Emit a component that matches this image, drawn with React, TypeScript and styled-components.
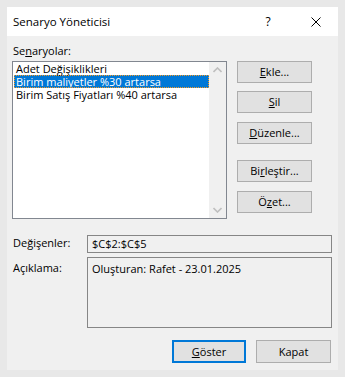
import React from 'react';
import styled, { createGlobalStyle } from 'styled-components';

const GlobalStyle = createGlobalStyle`
  html, body {
    margin: 0;
    padding: 0;
    background: #e8e8e8;
  }
  body {
    font-family: 'Open Sans', 'Noto Sans', sans-serif;
    font-size: 11px;
    color: #000;
  }
  * { box-sizing: border-box; }
`;

const Page = styled.div`
  width: 345px;
  height: 377px;
  padding: 7px;
`;

const Dialog = styled.div`
  width: 331px;
  height: 363px;
  background: #f0f0f0;
  display: flex;
  flex-direction: column;
`;

const TitleBar = styled.div`
  height: 29px;
  background: #fff;
  display: flex;
  align-items: center;
  padding-left: 6px;
`;

const Title = styled.span`
  flex: 1;
  font-size: 11.5px;
`;

const HelpGlyph = styled.span`
  width: 14px;
  text-align: center;
  font-size: 12px;
  margin-right: 36px;
`;

const CloseGlyph = styled.svg`
  width: 10px;
  height: 10px;
  margin-right: 17px;
`;

const Body = styled.div`
  flex: 1;
  display: flex;
  flex-direction: column;
  padding: 7px 6px 7px 5px;
`;

const GroupLabel = styled.div`
  line-height: 16px;
  padding-left: 1px;
  margin-bottom: 2px;
`;

const TopRow = styled.div`
  display: flex;
  gap: 10px;
`;

const ListBox = styled.div`
  width: 215px;
  height: 158px;
  border: 1px solid #828790;
  background: #fff;
  display: flex;
`;

const Items = styled.div`
  flex: 1;
`;

const Item = styled.div<{ $selected?: boolean }>`
  height: 13px;
  line-height: 13px;
  margin-left: 1px;
  padding-left: 2px;
  white-space: nowrap;
  background: ${p => (p.$selected ? '#0078d7' : 'transparent')};
  color: ${p => (p.$selected ? '#fff' : '#000')};
  outline: ${p => (p.$selected ? '1px dotted #f59a23' : 'none')};
  outline-offset: -1px;
`;

const ScrollBar = styled.div`
  width: 17px;
  background: #f0f0f0;
  display: flex;
  flex-direction: column;
  justify-content: space-between;
  align-items: center;
  padding: 5px 0;
`;

const Chevron = styled.svg`
  width: 9px;
  height: 6px;
`;

const ButtonCol = styled.div`
  display: flex;
  flex-direction: column;
  width: 75px;
`;

const Button = styled.button<{ $gapTop?: number; $primary?: boolean; $w?: number }>`
  width: ${p => p.$w ?? 75}px;
  height: 22px;
  margin-top: ${p => p.$gapTop ?? 0}px;
  background: #e1e1e1;
  border: ${p => (p.$primary ? '2px solid #0078d7' : '1px solid #adadad')};
  font-family: inherit;
  font-size: 11px;
  color: #000;
  padding: 0;
  line-height: 18px;
`;

const Fields = styled.div`
  display: flex;
  flex-direction: column;
  gap: 4px;
  margin-top: 16px;
`;

const FieldRow = styled.div`
  display: flex;
  align-items: flex-start;
`;

const FieldLabel = styled.div<{ $top?: number }>`
  width: 75px;
  padding-left: 1px;
  line-height: 16px;
  padding-top: ${p => p.$top ?? 0}px;
`;

const FieldBox = styled.div<{ $h: number; $top?: number }>`
  flex: 1;
  height: ${p => p.$h}px;
  border: 1px solid #868686;
  background: #f0f0f0;
  padding: ${p => p.$top ?? 0}px 4px 0;
  line-height: 16px;
`;

const Footer = styled.div`
  display: flex;
  justify-content: flex-end;
  gap: 10px;
  margin-top: 12px;
  padding-right: 1px;
`;

const FooterButton = styled(Button)`
  height: 23px;
`;

const App: React.FC = () => {
  return (
    <Page>
      <GlobalStyle />
      <Dialog>
        <TitleBar>
          <Title>Senaryo Yöneticisi</Title>
          <HelpGlyph>?</HelpGlyph>
          <CloseGlyph viewBox="0 0 10 10">
            <path d="M0.5 0.5 L9.5 9.5 M9.5 0.5 L0.5 9.5" stroke="#000" strokeWidth="1" fill="none" />
          </CloseGlyph>
        </TitleBar>
        <Body>
          <GroupLabel>Se<u>n</u>aryolar:</GroupLabel>
          <TopRow>
            <ListBox>
              <Items>
                <Item>Adet Değişiklikleri</Item>
                <Item $selected>Birim maliyetler %30 artarsa</Item>
                <Item>Birim Satış Fiyatları %40 artarsa</Item>
              </Items>
              <ScrollBar>
                <Chevron viewBox="0 0 9 6">
                  <path d="M0.5 5 L4.5 1 L8.5 5" stroke="#bfbfbf" strokeWidth="1.6" fill="none" />
                </Chevron>
                <Chevron viewBox="0 0 9 6">
                  <path d="M0.5 1 L4.5 5 L8.5 1" stroke="#bfbfbf" strokeWidth="1.6" fill="none" />
                </Chevron>
              </ScrollBar>
            </ListBox>
            <ButtonCol>
              <Button><u>E</u>kle...</Button>
              <Button $gapTop={8}><u>S</u>il</Button>
              <Button $gapTop={9}><u>D</u>üzenle...</Button>
              <Button $gapTop={16}>Bi<u>r</u>leştir...</Button>
              <Button $gapTop={9}>Ö<u>z</u>et...</Button>
            </ButtonCol>
          </TopRow>
          <Fields>
            <FieldRow>
              <FieldLabel>Değişenler:</FieldLabel>
              <FieldBox $h={18}>$C$2:$C$5</FieldBox>
            </FieldRow>
            <FieldRow>
              <FieldLabel $top={3}>Açıklama:</FieldLabel>
              <FieldBox $h={71} $top={3}>Oluşturan: Rafet - 23.01.2025</FieldBox>
            </FieldRow>
          </Fields>
          <Footer>
            <FooterButton $primary $w={74}><u>G</u>öster</FooterButton>
            <FooterButton>Kapat</FooterButton>
          </Footer>
        </Body>
      </Dialog>
    </Page>
  );
};

export default App;
